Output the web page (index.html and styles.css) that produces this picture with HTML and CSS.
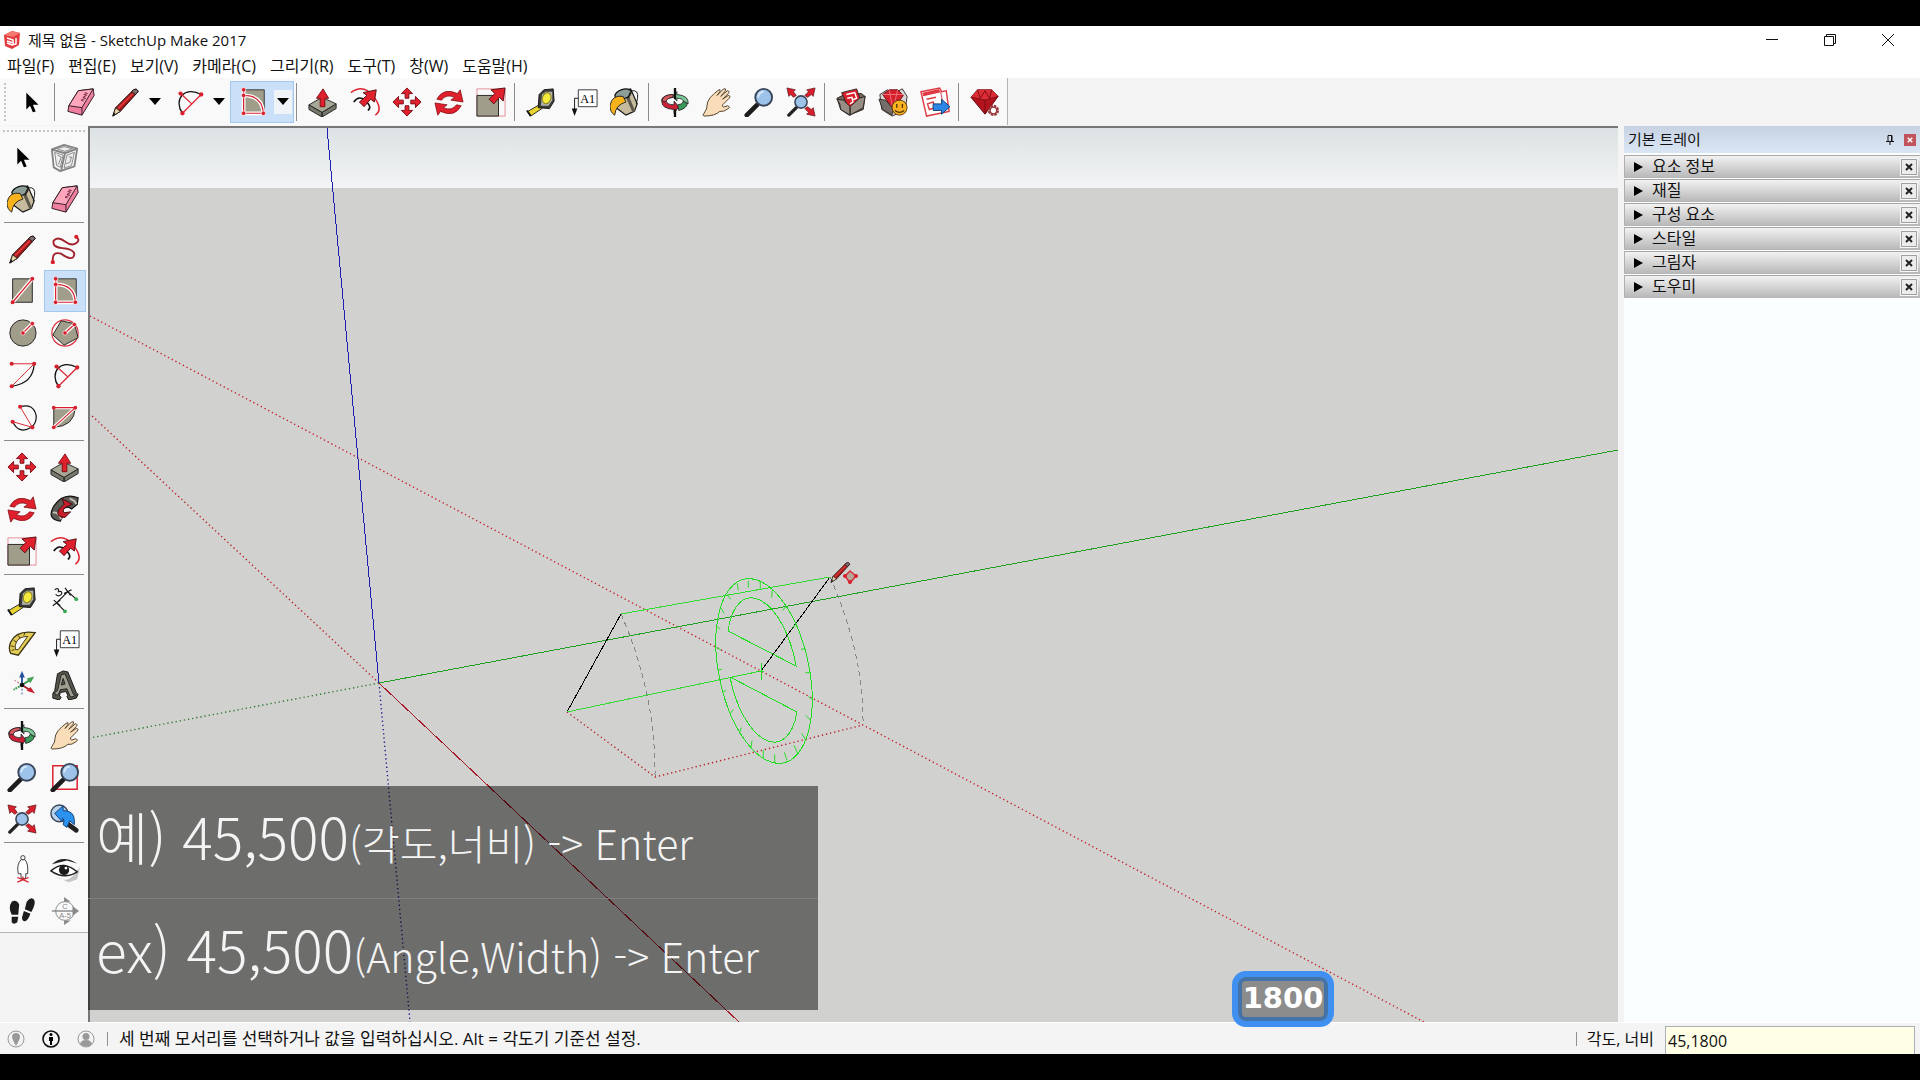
FILE: index.html
```html
<!DOCTYPE html>
<html lang="ko">
<head>
<meta charset="utf-8">
<meta name="viewport" content="width=device-width, initial-scale=1">
<title>제목 없음 - SketchUp Make 2017</title>
<link rel="stylesheet" href="styles.css">
</head>
<body>
<svg class="sprite" aria-hidden="true">
  <symbol id="cursor" viewBox="0 0 32 32"><path d="M11 6v18l4-4 3 7 3-1-3-7h6z" fill="#000"/></symbol>
  <symbol id="eraser" viewBox="0 0 32 32"><g stroke="#2b1a20" stroke-linejoin="round"><path d="M13 4l16-2 1 7-13 21-15-4 1-6z" fill="#ef7f9f"/><path d="M13 4l16-2-12 20-14-2z" fill="#ffa6bd"/><path d="M17 22v8" fill="none"/><path d="M20 6l3 1-4 1 3 1-4 2 3 1-5 2 3 1" fill="none" stroke="#7a2c44"/></g></symbol>
  <symbol id="pencil" viewBox="0 0 32 32"><path d="M3 31l3-9L25 3q4-2 5 2L11 26z" fill="#a01818" stroke="#221010"/><path d="M8 22L25 5l1 2L9 24z" fill="#e0363a"/><path d="M3 31l3-9 5 4z" fill="#e9d6a8" stroke="#222"/><path d="M3 31l1-4 2 2z" fill="#111"/><path d="M25 3q4-2 5 2l-3 3-4-3z" fill="#7d6f70" stroke="#221010"/></symbol>
  <symbol id="arc2" viewBox="0 0 32 32"><path d="M9 28C-1 14 11-2 29 8" fill="none" stroke="#111" stroke-width="1.4"/><path d="M9 28L29 8M7 7l12 11" stroke="#d8202c" stroke-width="1.3"/><g fill="#d8202c"><circle cx="9" cy="28" r="2.3"/><circle cx="29" cy="8" r="2.3"/><circle cx="7" cy="7" r="2.3"/></g></symbol>
  <symbol id="rotrect" viewBox="0 0 32 32"><path d="M6 3h22v25H6z" fill="#a09d8b" stroke="#333"/><path d="M6 3v25h21M6 9q20 0 21 19" fill="none" stroke="#fff" stroke-width="4"/><path d="M6 3v25h21M6 9q20 0 21 19" fill="none" stroke="#d8202c" stroke-width="1.3"/><g fill="#d8202c" stroke="#fff" stroke-width=".7"><circle cx="6" cy="3" r="2.4"/><circle cx="6" cy="9" r="2.4"/><circle cx="6" cy="28" r="2.4"/><circle cx="27" cy="28" r="2.4"/></g></symbol>
  <symbol id="pushpull" viewBox="0 0 32 32"><g stroke="#222" stroke-linejoin="round"><path d="M1 19l14 8v5L1 24zM15 27l15-9v5l-15 9z" fill="#77786c"/><path d="M1 19l14-8 15 7-15 9z" fill="#a8a896"/><path d="M13 21v-9H9l7-10 6 10h-4v9z" fill="#e0202c" stroke="#7c0d14"/></g></symbol>
  <symbol id="offset" viewBox="0 0 32 32"><path d="M1 6q13-10 24 4t2 20" fill="none" stroke="#dd2430" stroke-width="1.7"/><path d="M4 16q6-8 13-1t2 10" fill="none" stroke="#111" stroke-width="1.7"/><path d="M28 3l-2 13-4-3-7 8-5-5 8-7-4-3z" fill="#e0202c" stroke="#541014"/></symbol>
  <symbol id="move" viewBox="0 0 32 32"><g fill="#e0202c" stroke="#7c0d14"><path id="arm" d="M14 12V7h-4l6-6 6 6h-4v5z"/><use href="#arm" transform="rotate(90 16 16)"/><use href="#arm" transform="rotate(180 16 16)"/><use href="#arm" transform="rotate(270 16 16)"/></g></symbol>
  <symbol id="rotate" viewBox="0 0 32 32"><g fill="#e0202c" stroke="#7c0d14" stroke-width=".8"><path id="rotarm" d="M3 13Q10 0 25 7l3-4 3 13-13-2 4-3Q13 7 8 14z"/><use href="#rotarm" transform="rotate(180 16 16.500)"/></g></symbol>
  <symbol id="scale" viewBox="0 0 32 32"><path d="M1 2h30v29H1z" fill="none" stroke="#e58b92"/><path d="M1 9h23v22H1z" fill="#a09d8b" stroke="#222"/><path d="M31 1l-2 14-4-4-6 7-5-5 6-6-4-4z" fill="#e0202c" stroke="#541014"/></symbol>
  <symbol id="tape" viewBox="0 0 32 32"><path d="M2 26l12-7 3 4-12 8z" fill="#e8d42c" stroke="#222"/><path d="M1 25l4 6" stroke="#111" stroke-width="2"/><path d="M14 8l5-5 10-1 1 13-5 8-12-1z" fill="#3c3c38" stroke="#111"/><path d="M17 8l4-3 7 0v9l-4 6-8 0z" fill="#b4b4ae"/><ellipse cx="22" cy="12" rx="4.500" ry="6" fill="#f4ea3e" stroke="#887f18" transform="rotate(20 22 12)"/></symbol>
  <symbol id="label" viewBox="0 0 32 32"><path d="M11 3h20v18H11z" fill="#fff" stroke="#333"/><path d="M11 12H7v12" fill="none" stroke="#111"/><path d="M4 23h6L7 31z" fill="#111"/></symbol>
  <symbol id="bucket" viewBox="0 0 32 32"><path d="M10 5l12-3 7 16-3 8-9 4-12-9z" fill="#c6bb9c" stroke="#111" stroke-width="1.300"/><path d="M16 9l8 18 3-1-8-19z" fill="#5c594c"/><ellipse cx="14" cy="7.500" rx="9" ry="5" fill="#8d9d98" stroke="#111" stroke-width="1.300" transform="rotate(-18 14 7.500)"/><path d="M20 12q0-9 6-8t2 14" fill="none" stroke="#111"/><path d="M14 10Q2 8 0 20q0 7 5 10 1-11 12-14z" fill="#f8b21c" stroke="#222"/></symbol>
  <symbol id="orbit" viewBox="0 0 32 32"><g stroke="#222" stroke-width=".9"><path d="M14 8q-14 1-12 8 0 7 13 8v4l5-7-5-6v4q-8 0-9-5 1-2 8-3z" fill="#cc2036"/><path d="M2 15Q3 8 14 8v3q-6 0-8 5z" fill="#d4585c"/><path d="M29 18q-1 5-9 7l-1-6q5 0 6-4z" fill="#3a9a5c"/><path d="M18 5v3q13 1 12 10l-5-3q-1-3-7-3v3l-4-5z" fill="#7cc798"/></g><path d="M16 1v12M16 24v8" stroke="#111" stroke-width="2.500"/></symbol>
  <symbol id="hand" viewBox="0 0 32 32"><path d="M1 30q5-6 5-14 2-5 7-9l5-4q2-1 1 2l-3 4 7-7q3-1 2 2l-5 6 7-6q3 0 1 3l-6 6 6-4q3 0 1 3l-7 7q-1 4 5 1 4 1 1 3-5 4-9 3-5 5-17 5z" fill="#f8ddb8" stroke="#4c3c28"/></symbol>
  <symbol id="zoom" viewBox="0 0 32 32"><path d="M3 30L14 19" stroke="#1c1c1c" stroke-width="5" stroke-linecap="round"/><circle cx="21" cy="11" r="9" fill="#9dc3ea" stroke="#3a4658" stroke-width="2"/><path d="M15 11q1-6 6-6" fill="none" stroke="#d6e8f8" stroke-width="2"/></symbol>
  <symbol id="zoomwin" viewBox="0 0 32 32"><path d="M3 4h26v25H3z" fill="none" stroke="#dd2430" stroke-width="1.600"/><use href="#zoom"/></symbol>
  <symbol id="extents" viewBox="0 0 32 32"><path d="M3 30l8-8" stroke="#222" stroke-width="3.500" stroke-linecap="round"/><circle cx="16" cy="16" r="6.500" fill="#9dc3ea" stroke="#3a4658" stroke-width="1.700"/><g fill="#d8202c" stroke="#541014" stroke-width=".7"><path d="M1 1l9 2-2 2 3 4-3 2-3-3-2 2zM31 1l-9 2 2 2-4 4 3 2 4-3 2 2zM31 31l-9-2 2-2-4-4 3-2 4 3 2-2z"/></g></symbol>
  <symbol id="prev" viewBox="0 0 32 32"><circle cx="10" cy="10" r="9" fill="#b9d3ee" stroke="#3a4658" stroke-width="1.500"/><path d="M17 20l11 8" stroke="#222" stroke-width="5" stroke-linecap="round"/><path d="M5 10l9-8v5q12 0 12 11v4l-5-4-3 7-4-3q2-6-1-7v4z" fill="#2b92f0" stroke="#123f74"/></symbol>
  <symbol id="warehouse" viewBox="0 0 32 32"><g stroke="#2c2420" stroke-linejoin="round"><path d="M1 12l8-4 18-1 4 3-2 14-15 6L5 24z" fill="#71675f"/><path d="M6 6l16-4 5 14-13 8z" fill="#d8202c"/><path d="M1 13l7 1 7 7v9L5 24l-1-6zM31 10l-6 2-10 9v9l14-8z" fill="#988d84"/></g><path d="M11 8l9-2 2 6-5 2M12 12l5-1 1 5-3 2" fill="none" stroke="#fff" stroke-width="1.500"/></symbol>
  <symbol id="extwarehouse" viewBox="0 0 32 32"><path d="M2 8l8-5 6 4 10-5 5 8-2 15-14 6L4 24z" fill="#d9d5d2" stroke="#332d2a"/><path d="M5 8l7-5h9l6 6-11 15z" fill="#d8202c" stroke="#6c0d14"/><path d="M5 8h22M12 3l4 21 5-21" fill="none" stroke="#f08a90" stroke-width=".8"/><path d="M1 13l7 1 8 9-1 7-10-6z" fill="#756d67" stroke="#332d2a"/><circle cx="23" cy="22" r="8" fill="#f9b122" stroke="#523a08"/><path d="M20 18v4M26 18v4M18 25q5 4 10 0" fill="none" stroke="#4b3306" stroke-width="1.400"/></symbol>
  <symbol id="layout" viewBox="0 0 32 32"><path d="M1 5l20-4 2 4 5-1 3 22-24 5z" fill="#fff" stroke="#df3a44" stroke-width="1.500"/><path d="M3 8l18-4" stroke="#df3a44" stroke-width="4"/><path d="M22 5l4 22" stroke="#df3a44"/><path d="M7 13l10-2M8 18l6-2 2 6-6 2z" fill="none" stroke="#df3a44" stroke-width="1.500"/><path d="M14 18h9v-5l9 8-9 8v-4h-9z" fill="#2b86e4" stroke="#123f74"/></symbol>
  <symbol id="ruby" viewBox="0 0 32 32"><path d="M1 11l7-8h15l7 7-14 19z" fill="#b4121c" stroke="#5c0a10"/><path d="M1 11l7-8h15l7 7-14 4z" fill="#dc2c36"/><path d="M2 11l14 3 14-4M8 3l3 9 5-8 5 8 2-9M16 14v14" fill="none" stroke="#7c0d14"/><circle cx="25" cy="25" r="4.500" fill="#fff" stroke="#9b3a3e" stroke-width="3" stroke-dasharray="2.500 1"/><circle cx="25" cy="25" r="3.500" fill="none" stroke="#9b3a3e" stroke-width="1.500"/></symbol>
  <symbol id="component" viewBox="0 0 32 32"><g fill="none" stroke="#858585" stroke-linejoin="round"><path d="M2 8l13-5 14 4-3 19-15 5-7-4z" stroke-width="2"/><path d="M2 8l14 4 13-5M16 12l-4 18" stroke-width="2"/><path d="M5 11l9 3-3 13-4-2zM18 14l8-3-3 14-8 3zM7 7l8-2 9 2-8 3zM8 14l4 2-3 8M20 16l3 0-2 6-4 1" fill="#ededed"/></g></symbol>
  <symbol id="freehand" viewBox="0 0 32 32"><path d="M3 29q-1-11 9-8 12 9 14 1 0-6-13-7Q2 14 4 7q4-5 12 1t13 1q3-3-1-6" fill="none" stroke="#a0222c" stroke-width="2"/><g fill="#d8202c"><circle cx="3" cy="30" r="2.200"/><circle cx="28" cy="3" r="2.200"/></g></symbol>
  <symbol id="rect" viewBox="0 0 32 32"><path d="M6 3h21v25H6z" fill="#a09d8b" stroke="#222"/><path d="M6 28L27 3" stroke="#fff" stroke-width="4"/><path d="M6 28L27 3" stroke="#d8202c" stroke-width="1.300"/><g fill="#d8202c"><circle cx="6" cy="28" r="2.100"/><circle cx="27" cy="3" r="2.100"/></g></symbol>
  <symbol id="circle" viewBox="0 0 32 32"><circle cx="17" cy="16" r="14" fill="#a09d8b" stroke="#222"/><path d="M17 16l10-10" stroke="#fff" stroke-width="4"/><path d="M17 16l10-10" stroke="#d8202c" stroke-width="1.300"/><g fill="#d8202c" stroke="#fff" stroke-width=".6"><circle cx="17" cy="16" r="2.300"/><circle cx="27" cy="6" r="2.300"/></g></symbol>
  <symbol id="polygon" viewBox="0 0 32 32"><circle cx="16" cy="16" r="14" fill="none" stroke="#dd3540" stroke-width="1.300"/><path d="M12 3l14 3 4 15-15 8L3 18z" fill="#a09d8b" stroke="#222"/><path d="M16 16l10-9" stroke="#fff" stroke-width="4"/><path d="M16 16l10-9" stroke="#d8202c" stroke-width="1.300"/><g fill="#d8202c" stroke="#fff" stroke-width=".6"><circle cx="16" cy="16" r="2.300"/><circle cx="26" cy="7" r="2.300"/></g></symbol>
  <symbol id="arc" viewBox="0 0 32 32"><path d="M29 4Q28 25 5 28" fill="none" stroke="#111" stroke-width="1.300"/><path d="M5 28L29 4H5" fill="none" stroke="#d8202c"/><g fill="#d8202c"><circle cx="5" cy="28" r="2.200"/><circle cx="29" cy="4" r="2.200"/><circle cx="5" cy="4" r="2.200"/></g></symbol>
  <symbol id="arc3" viewBox="0 0 32 32"><path d="M14 5q14-4 17 9 1 8-5 13-13 8-20-6" fill="none" stroke="#111" stroke-width="1.300"/><path d="M14 5l13 22L6 21" fill="none" stroke="#d8202c"/><g fill="#d8202c"><circle cx="14" cy="5" r="2.200"/><circle cx="27" cy="27" r="2.200"/><circle cx="6" cy="21" r="2.200"/></g></symbol>
  <symbol id="pie" viewBox="0 0 32 32"><path d="M4 6h23q-1 20-23 21z" fill="#a09d8b" stroke="#222"/><path d="M4 27L27 6H4" fill="none" stroke="#fff" stroke-width="3.500"/><path d="M4 27L27 6H4" fill="none" stroke="#d8202c" stroke-width="1.200"/><g fill="#d8202c"><circle cx="4" cy="27" r="2"/><circle cx="27" cy="6" r="2"/><circle cx="4" cy="6" r="2"/></g></symbol>
  <symbol id="follow" viewBox="0 0 32 32"><path d="M11 29Q-4 27 4 13 14-2 30 4l-1 7-6 5q-4-4-9 0-4 4-1 9z" fill="#5d5b56" stroke="#111" stroke-width="1.300"/><path d="M3 20q5-2 9 7M21 5q6 2 7 6" fill="none" stroke="#c9c5b6" stroke-width="2"/><path d="M13 5l11 6-5 2q-7 3-4 7l7-1-6 6q-10 0-7-8l6-6z" fill="#c81e2a" stroke="#3c0c10"/></symbol>
  <symbol id="dimension" viewBox="0 0 32 32"><path d="M7 18L19 6M7 18l9 9M19 6l9 8M4 15l7 6M3 21l8-6M16 2l6 8M15 8l8-4" fill="none" stroke="#111" stroke-width="1.200"/><path d="M5 4q5-3 4 2 5-1 3 3-3 3-6 0" fill="none" stroke="#222" stroke-width="1.300"/><g fill="#36a853"><circle cx="16" cy="27" r="2"/><circle cx="28" cy="14" r="2"/></g></symbol>
  <symbol id="protractor" viewBox="0 0 32 32"><path d="M30 5Q10 2 4 15q-3 7 0 12l8 2z" fill="#e3cc55" stroke="#3c3414" stroke-width="1.400"/><path d="M22 9Q13 9 10 15q-2 4-1 8h3z" fill="#fafafa" stroke="#3c3414"/><path d="M5 24l3-1M4 19l4 1M7 13l3 2M12 8l2 3M19 5l-1 3" stroke="#3c3414"/></symbol>
  <symbol id="axes" viewBox="0 0 32 32"><path d="M16 16V7" stroke="#24549c" stroke-width="2"/><path d="M13 8l3-7 3 7z" fill="#24549c"/><path d="M16 16l8-5" stroke="#2f9040" stroke-width="2"/><path d="M21 9l8-2-4 7z" fill="#44a054"/><path d="M16 16l8 5" stroke="#a82028" stroke-width="2"/><path d="M21 22l4-4 5 7z" fill="#c8202c"/><path d="M16 16v11" stroke="#24549c" stroke-dasharray="2 2"/><path d="M16 16l-9 5" stroke="#2f9040" stroke-width="2" stroke-dasharray="2 1"/><path d="M16 16l-8-5" stroke="#a82028" stroke-dasharray="2 2"/><circle cx="16" cy="16" r="2.500" fill="#111"/></symbol>
  <symbol id="text3d" viewBox="0 0 32 32"><path d="M3 25l2-3L8 4l6-3 5 1 9 22 2 2-2 4-8 2-2-4 1-1-2-4-6 1-1 4 2 1-2 3-7-2z" fill="#55554c" stroke="#111"/><path d="M5 24l3-2 4-17 4-1 9 22 3 1-6 2-1-2-3-7-7 1-2 5-3 1zM12 16l4-1-2-6z" fill="#a09e90" stroke="#222"/></symbol>
  <symbol id="camera" viewBox="0 0 32 32"><path d="M15 6q-5 5-3 15h3v5h5v-5h2q1-11-3-15z" fill="#fff" stroke="#333"/><circle cx="17" cy="4" r="2.300" fill="#fff" stroke="#333"/><path d="M11 25l12 5M23 25l-12 5M17 24v4" stroke="#d8202c" stroke-width="1.300"/></symbol>
  <symbol id="eye" viewBox="0 0 32 32"><path d="M6 24q10 8 20-2l6-9-3 14-9 3z" fill="#c4c4c4"/><path d="M1 18Q14 6 29 19 15 28 1 18z" fill="#fff" stroke="#222" stroke-width="1.600"/><path d="M2 11Q13 0 29 10L18 7z" fill="#222"/><circle cx="15" cy="17" r="5.500" fill="#1a1a1a"/><circle cx="17" cy="15" r="1.500" fill="#fff"/></symbol>
  <symbol id="walk" viewBox="0 0 32 32"><g fill="#1c1c1c"><path d="M5 6q5-3 8 3l-1 11H5Q1 12 5 6zM5 22h7l-1 6q-4 3-6 0zM21 6q5-6 8-2 2 4-3 13l-7-3zM18 16l7 3q-3 8-6 8t-3-4z"/></g></symbol>
  <symbol id="section" viewBox="0 0 32 32"><g fill="none" stroke="#888"><circle cx="16" cy="16" r="10"/><path d="M2 16h27" stroke-width="1.500"/></g><path d="M15 1l7 5h-7zM15 31l7-5h-7zM24 11l7 5-7 5z" fill="#888"/></symbol>
</svg>

<header class="titlebar">
  <svg class="logo" viewBox="0 0 18 20" aria-hidden="true"><path d="M1 5l8-4 8 2-1 12-7 4-7-3z" fill="#e23b3f"/><path d="M1 5l8-4 8 2-7 4z" fill="#f47a70"/><path d="M4 8l6 2v3l-6-2M4 13l5 2 4-1V8" fill="none" stroke="#fff" stroke-width="1.500"/></svg>
  <h1 class="title">제목 없음 - SketchUp Make 2017</h1>
  <div class="window-buttons">
    <button aria-label="최소화"><svg viewBox="0 0 14 14"><path d="M1 6.500h12"/></svg></button>
    <button aria-label="이전 크기로"><svg viewBox="0 0 14 14"><path d="M1.500 3.500h9v9h-9zM3.500 3V1.500h9v9H11"/></svg></button>
    <button aria-label="닫기"><svg viewBox="0 0 14 14"><path d="M1 1l12 12M13 1L1 13"/></svg></button>
  </div>
</header>

<nav class="menubar">
  <button>파일(F)</button><button>편집(E)</button><button>보기(V)</button><button>카메라(C)</button><button>그리기(R)</button><button>도구(T)</button><button>창(W)</button><button>도움말(H)</button>
</nav>

<div class="toolstrip">
  <div class="toolbar" role="toolbar" aria-label="시작하기">
    <span class="grip"></span>
    <button class="tool" aria-label="선택"><svg><use href="#cursor"/></svg></button>
    <span class="sep"></span>
    <button class="tool" aria-label="지우개"><svg><use href="#eraser"/></svg></button>
    <div class="split"><button class="tool" aria-label="선"><svg><use href="#pencil"/></svg></button><button class="drop" aria-label="선 도구 목록"></button></div>
    <div class="split"><button class="tool" aria-label="호"><svg><use href="#arc2"/></svg></button><button class="drop" aria-label="호 도구 목록"></button></div>
    <div class="split active"><button class="tool" aria-label="회전된 사각형"><svg><use href="#rotrect"/></svg></button><button class="drop" aria-label="도형 도구 목록"></button></div>
    <span class="sep"></span>
    <button class="tool" aria-label="밀기/끌기"><svg><use href="#pushpull"/></svg></button>
    <button class="tool" aria-label="오프셋"><svg><use href="#offset"/></svg></button>
    <button class="tool" aria-label="이동"><svg><use href="#move"/></svg></button>
    <button class="tool" aria-label="회전"><svg><use href="#rotate"/></svg></button>
    <button class="tool" aria-label="배율"><svg><use href="#scale"/></svg></button>
    <span class="sep"></span>
    <button class="tool" aria-label="줄자 도구"><svg><use href="#tape"/></svg></button>
    <button class="tool" aria-label="텍스트"><svg viewBox="0 0 32 32"><use href="#label"/><text x="21" y="17" class="icon-text">A1</text></svg></button>
    <button class="tool" aria-label="페인트 통"><svg><use href="#bucket"/></svg></button>
    <span class="sep"></span>
    <button class="tool" aria-label="궤도"><svg><use href="#orbit"/></svg></button>
    <button class="tool" aria-label="화면 이동"><svg><use href="#hand"/></svg></button>
    <button class="tool" aria-label="확대/축소"><svg><use href="#zoom"/></svg></button>
    <button class="tool" aria-label="범위 확대/축소"><svg><use href="#extents"/></svg></button>
    <span class="sep"></span>
    <button class="tool" aria-label="3D Warehouse"><svg><use href="#warehouse"/></svg></button>
    <button class="tool" aria-label="Extension Warehouse"><svg><use href="#extwarehouse"/></svg></button>
    <button class="tool" aria-label="LayOut으로 보내기"><svg><use href="#layout"/></svg></button>
    <span class="sep"></span>
    <button class="tool" aria-label="확장 관리자"><svg><use href="#ruby"/></svg></button>
  </div>
</div>

<main class="workspace">
  <aside class="palette-dock">
    <div class="palette" role="toolbar" aria-label="큰 도구 세트">
      <span class="palette-grip"></span>
      <div class="tool-group">
        <button class="tool" aria-label="선택"><svg><use href="#cursor"/></svg></button>
        <button class="tool" aria-label="구성 요소 만들기"><svg><use href="#component"/></svg></button>
        <button class="tool" aria-label="페인트 통"><svg><use href="#bucket"/></svg></button>
        <button class="tool" aria-label="지우개"><svg><use href="#eraser"/></svg></button>
      </div>
      <div class="tool-group">
        <button class="tool" aria-label="선"><svg><use href="#pencil"/></svg></button>
        <button class="tool" aria-label="자유형"><svg><use href="#freehand"/></svg></button>
        <button class="tool" aria-label="사각형"><svg><use href="#rect"/></svg></button>
        <button class="tool active" aria-label="회전된 사각형"><svg><use href="#rotrect"/></svg></button>
        <button class="tool" aria-label="원"><svg><use href="#circle"/></svg></button>
        <button class="tool" aria-label="다각형"><svg><use href="#polygon"/></svg></button>
        <button class="tool" aria-label="호"><svg><use href="#arc"/></svg></button>
        <button class="tool" aria-label="2점 호"><svg><use href="#arc2"/></svg></button>
        <button class="tool" aria-label="3점 호"><svg><use href="#arc3"/></svg></button>
        <button class="tool" aria-label="파이"><svg><use href="#pie"/></svg></button>
      </div>
      <div class="tool-group">
        <button class="tool" aria-label="이동"><svg><use href="#move"/></svg></button>
        <button class="tool" aria-label="밀기/끌기"><svg><use href="#pushpull"/></svg></button>
        <button class="tool" aria-label="회전"><svg><use href="#rotate"/></svg></button>
        <button class="tool" aria-label="따라가기"><svg><use href="#follow"/></svg></button>
        <button class="tool" aria-label="배율"><svg><use href="#scale"/></svg></button>
        <button class="tool" aria-label="오프셋"><svg><use href="#offset"/></svg></button>
      </div>
      <div class="tool-group">
        <button class="tool" aria-label="줄자 도구"><svg><use href="#tape"/></svg></button>
        <button class="tool" aria-label="치수"><svg><use href="#dimension"/></svg></button>
        <button class="tool" aria-label="각도기"><svg><use href="#protractor"/></svg></button>
        <button class="tool" aria-label="텍스트"><svg viewBox="0 0 32 32"><use href="#label"/><text x="21" y="17" class="icon-text">A1</text></svg></button>
        <button class="tool" aria-label="축"><svg><use href="#axes"/></svg></button>
        <button class="tool" aria-label="3D 텍스트"><svg><use href="#text3d"/></svg></button>
      </div>
      <div class="tool-group">
        <button class="tool" aria-label="궤도"><svg><use href="#orbit"/></svg></button>
        <button class="tool" aria-label="화면 이동"><svg><use href="#hand"/></svg></button>
        <button class="tool" aria-label="확대/축소"><svg><use href="#zoom"/></svg></button>
        <button class="tool" aria-label="창 확대/축소"><svg><use href="#zoomwin"/></svg></button>
        <button class="tool" aria-label="범위 확대/축소"><svg><use href="#extents"/></svg></button>
        <button class="tool" aria-label="이전"><svg><use href="#prev"/></svg></button>
      </div>
      <div class="tool-group">
        <button class="tool" aria-label="카메라 배치"><svg><use href="#camera"/></svg></button>
        <button class="tool" aria-label="둘러보기"><svg><use href="#eye"/></svg></button>
        <button class="tool" aria-label="이동 시점"><svg><use href="#walk"/></svg></button>
        <button class="tool" aria-label="단면"><svg viewBox="0 0 32 32"><use href="#section"/><text x="16" y="14" class="icon-mini">C</text><text x="16" y="23" class="icon-mini">A-5</text></svg></button>
      </div>
    </div>
  </aside>

  <section class="viewport" aria-label="모델">
    <svg class="scene" viewBox="90 128 1528 894" preserveAspectRatio="xMinYMin slice">
      <!-- drawing axes -->
      <g class="dotted">
        <path d="M379 683L410 1022" stroke="#1c1c90"/>
        <path d="M379 683L90 738" stroke="#2c7a2c"/>
        <path d="M379 683L90 414" stroke="#b81c24"/>
        <path d="M90 316L863 725 1424 1022" stroke="#c41c2c"/>
        <path d="M567 712L655 777 863 725" stroke="#b81c24"/>
      </g>
      <g fill="none" shape-rendering="crispEdges">
        <path d="M327 128L379 683" stroke="#2020b0"/>
        <path d="M379 683L1618 450" stroke="#20a020"/>
        <path d="M379 683L739 1022" stroke="#a81828"/>
        <path d="M621 614Q656 694 655 777M830 577Q864 654 863 725" stroke="#858585" stroke-dasharray="5 4"/>
        <path d="M567 712L621 614M761 671L830 577" stroke="#000"/>
        <path d="M621 614L830 577M567 712L761 671" stroke="#30dc30"/>
      </g>
      <!-- protractor -->
      <g fill="none" stroke="#22dc22" shape-rendering="crispEdges">
        <ellipse cx="764" cy="671" rx="94" ry="45" transform="rotate(78 764 671)"/>
        <path d="M728 631L796 666A70 33 78 0 0 728 631M730 677L797 712A70 33 78 0 1 730 677M761 663v17M756 671h8"/>
      </g>
      <g class="ticks" transform="translate(540 540) scale(.3333)">
        <path d="M592 130l3 21M625 122v21M661 125v22M697 150l-2 23M738 199l-10 13M769 250l-12 15M783 328l13-3M796 398h15M805 470l12 8M797 526l14 14M785 580l12 20M762 616l11 24M733 637l8 24M704 643v25M670 630v26M636 602l-3 23M604 563l-6 18M580 508l-10 14M559 452l-12 4M546 388l-13 2M543 330l-14-8M541 268l-11-10M552 220l-9-17M572 178l-10-15"/>
      </g>
      <use href="#pencil" x="829" y="561" width="22" height="22"/>
      <path d="M845 576l5-5 6 5-6 7z" fill="#b4a898" stroke="#d8303c" stroke-width="1.500"/>
      <g fill="#d8202c"><circle cx="845" cy="576" r="2"/><circle cx="856" cy="576" r="2"/><circle cx="850" cy="582" r="2"/></g>
    </svg>
    <div class="caption">
      <p><b>예) 45,500</b>(각도,너비) -&gt; Enter</p>
      <p><b>ex) 45,500</b>(Angle,Width) -&gt; Enter</p>
    </div>
    <div class="keycast">1800</div>
  </section>

  <aside class="tray">
    <header class="tray-title">
      <h2>기본 트레이</h2>
      <button class="pin" aria-label="자동 숨기기"><svg viewBox="0 0 8 10"><path d="M2 0.500h4V6M2 0.500V6M0 6.500h8M4 6v4M5.500 1v5"/></svg></button>
      <button class="tray-close" aria-label="트레이 닫기"><svg viewBox="0 0 8 8"><path d="M1 1l6 6M7 1L1 7"/></svg></button>
    </header>
    <ul class="panels">
      <li><button class="panel-name">요소 정보</button><button class="panel-close" aria-label="요소 정보 닫기"><svg viewBox="0 0 8 8"><path d="M1 1l6 6M7 1L1 7"/></svg></button></li>
      <li><button class="panel-name">재질</button><button class="panel-close" aria-label="재질 닫기"><svg viewBox="0 0 8 8"><path d="M1 1l6 6M7 1L1 7"/></svg></button></li>
      <li><button class="panel-name">구성 요소</button><button class="panel-close" aria-label="구성 요소 닫기"><svg viewBox="0 0 8 8"><path d="M1 1l6 6M7 1L1 7"/></svg></button></li>
      <li><button class="panel-name">스타일</button><button class="panel-close" aria-label="스타일 닫기"><svg viewBox="0 0 8 8"><path d="M1 1l6 6M7 1L1 7"/></svg></button></li>
      <li><button class="panel-name">그림자</button><button class="panel-close" aria-label="그림자 닫기"><svg viewBox="0 0 8 8"><path d="M1 1l6 6M7 1L1 7"/></svg></button></li>
      <li><button class="panel-name">도우미</button><button class="panel-close" aria-label="도우미 닫기"><svg viewBox="0 0 8 8"><path d="M1 1l6 6M7 1L1 7"/></svg></button></li>
    </ul>
  </aside>
</main>

<footer class="statusbar">
  <button class="status-icon" aria-label="위치 정보"><svg viewBox="0 0 18 18"><circle cx="9" cy="9" r="8" fill="none" stroke="#999"/><path d="M9 16Q5 9 5 7a4 4 0 0 1 8 0q0 2-4 9z" fill="#999"/></svg></button>
  <button class="status-icon" aria-label="제작자"><svg viewBox="0 0 18 18"><circle cx="9" cy="9" r="8" fill="none" stroke="#111" stroke-width="1.600"/><circle cx="9" cy="4.500" r="1.500"/><path d="M7 7h4v4h-1v4H8v-4H7z"/></svg></button>
  <button class="status-icon" aria-label="로그인"><svg viewBox="0 0 18 18"><circle cx="9" cy="9" r="8" fill="none" stroke="#999"/><circle cx="9" cy="6.500" r="3.500" fill="#999"/><path d="M3 14q1-4 6-4t6 4q-6 5-12 0z" fill="#999"/></svg></button>
  <span class="rule"></span>
  <p class="hint">세 번째 모서리를 선택하거나 값을 입력하십시오. Alt = 각도기 기준선 설정.</p>
  <span class="rule"></span>
  <label for="measure">각도, 너비</label>
  <input id="measure" class="measure" type="text" value="45,1800">
</footer>
</body>
</html>
```
FILE: styles.css
```css
* { box-sizing: border-box; }

body {
  margin: 0;
  padding: 26px 0;
  min-height: 100vh;
  display: flex;
  flex-direction: column;
  background: #000;
  color: #111;
  font: 16px/20px "Open Sans", "Noto Sans CJK KR", sans-serif;
}

h1, h2, p, ul { margin: 0; padding: 0; font: inherit; }
ul { list-style: none; }

button {
  margin: 0;
  padding: 0;
  border: 0;
  background: none;
  color: inherit;
  font: inherit;
}

.sprite { position: absolute; width: 0; height: 0; }
.icon-text { font: 13px "Liberation Serif", serif; text-anchor: middle; }
.icon-mini { font: 8px "Liberation Sans", sans-serif; fill: #888; text-anchor: middle; }

/* Title bar and menus */
.titlebar {
  display: flex;
  align-items: center;
  height: 28px;
  padding: 0 3px;
  background: #fff;
}
.logo { width: 18px; height: 20px; }
.title { flex: 1; margin-left: 7px; white-space: nowrap; font-size: 15px; }
.window-buttons { display: flex; }
.window-buttons button { width: 58px; height: 28px; }
.window-buttons svg {
  display: block;
  width: 14px;
  height: 14px;
  margin: 0 auto;
  fill: none;
  stroke: #111;
}

.menubar {
  display: flex;
  gap: 14px;
  height: 24px;
  padding: 0 7px;
  background: #fff;
  white-space: nowrap;
}
.menubar button { line-height: 24px; }

/* Horizontal toolbar */
.toolstrip { display: flex; height: 48px; background: #f4f4f4; }
.toolbar {
  display: flex;
  align-items: center;
  height: 47px;
  padding-right: 1px;
  background: #f9f9fa;
  border-right: 1px solid #b5b5b5;
}
.grip {
  width: 10px;
  height: 38px;
  background: linear-gradient(#c4c4c4 50%, transparent 50%) 4px 0 / 2px 4px repeat-y;
}
.tool {
  display: grid;
  place-items: center;
  width: 42px;
  height: 42px;
  flex: none;
}
.tool svg { width: 30px; height: 30px; overflow: visible; }
.sep { width: 8px; height: 38px; background: linear-gradient(#8c8c8c, #8c8c8c) 2px 0 / 1px 100% no-repeat; }
.split { display: flex; align-items: center; width: 64px; }
.split .tool { padding-left: 3px; }
.drop { display: grid; place-items: center; width: 21px; height: 24px; }
.drop::before {
  content: "";
  border: 6px solid transparent;
  border-top: 7px solid #000;
  border-bottom: 0;
}
.active { background: #c9e0f8; outline: 1px solid #a4c9ee; outline-offset: -1px; }
.active .drop { width: 18px; margin-left: 2px; background: #f0f4f9; }

/* Workspace columns */
.workspace { flex: 1; display: flex; background: #f4f4f4; min-height: 0; }
.palette-dock { width: 88px; flex: none; }
.palette {
  padding: 4px 0 0 1px;
  background: #f9f9fa;
  border-bottom: 1px solid #b5b5b5;
}
.palette-grip {
  display: block;
  height: 2px;
  margin: 0 2px 4px;
  background: linear-gradient(90deg, #c4c4c4 50%, transparent 50%) 0 0 / 4px 2px repeat-x;
}
.tool-group { display: grid; grid-template-columns: 42px 42px; column-gap: 1px; }
.tool-group + .tool-group { padding-top: 8px; background: linear-gradient(#8c8c8c, #8c8c8c) 3px 2px / 80px 1px no-repeat; }

.viewport {
  position: relative;
  flex: 1;
  min-width: 0;
  border: solid #777;
  border-width: 2px 0 0 2px;
  background: linear-gradient(#dde2e4, #f2f4f5 60px, #d1d1cf 60px);
}
.scene { position: absolute; inset: 0; width: 100%; height: 100%; }
.dotted path { fill: none; stroke-width: 1.4; stroke-dasharray: 1.3 2.9; }
.ticks path { fill: none; stroke: #30dc30; stroke-width: 3; }

.caption {
  position: absolute;
  left: -2px;
  bottom: 12px;
  width: 730px;
  background: rgba(0, 0, 0, .48);
  color: #f4f4f4;
  font: 300 41px/98px "Noto Sans CJK KR", sans-serif;
  white-space: nowrap;
}
.caption p { height: 112px; padding-left: 8px; }
.caption p + p { border-top: 1px solid #808080; }
.caption b { font-weight: 300; font-size: 57px; }

.keycast {
  position: absolute;
  right: 284px;
  bottom: -5px;
  width: 102px;
  height: 56px;
  border: 6px solid #3f90f0;
  border-radius: 14px;
  background: #8c8c8c;
  box-shadow: inset 0 0 0 4px #4373a8;
  color: #fff;
  font: bold 29px/42px "DejaVu Sans", sans-serif;
  text-align: center;
}

/* Tray */
.tray { width: 296px; flex: none; margin-left: 6px; background: #fbfeff; }
.tray-title {
  display: flex;
  align-items: center;
  gap: 10px;
  height: 27px;
  margin-bottom: 2px;
  padding: 0 4px;
  background: linear-gradient(#c6d2e2, #dbe6f5);
}
.tray-title h2 { flex: 1; height: 22px; font-size: 15px; }
.tray-title button { display: grid; place-items: center; }
.pin svg { width: 8px; height: 10px; fill: none; stroke: #111; }
.tray-close { width: 12px; height: 12px; background: #c0545a; }
.tray-close svg { width: 6px; height: 6px; stroke: #fff; stroke-width: 2; }
.panels li {
  display: flex;
  align-items: center;
  height: 23px;
  margin-bottom: 1px;
  padding-right: 3px;
  border-top: 1px solid #a8a8a8;
  border-left: 1px solid #b0b0b0;
  background: linear-gradient(#f2f2f2, #b6b6b6);
}
.panel-name {
  display: flex;
  align-items: center;
  align-self: flex-start;
  flex: 1;
  height: 20px;
  text-align: left;
}
.panel-name::before {
  content: "";
  margin: 2px 9px 0;
  border: 5px solid transparent;
  border-left: 9px solid #000;
  border-right: 0;
}
.panel-close {
  display: grid;
  place-items: center;
  width: 16px;
  height: 16px;
  border: 1px solid #a0a0a0;
  background: #ececec;
  outline: 1px solid #f8f8f8;
}
.panel-close svg { width: 8px; height: 8px; stroke: #222; stroke-width: 2; }

/* Status bar */
.statusbar {
  display: flex;
  align-items: center;
  height: 32px;
  padding: 0 5px 0 7px;
  background: #f4f4f5;
  border-top: 1px solid #fff;
  white-space: nowrap;
}
.status-icon { width: 18px; height: 18px; margin-right: 17px; }
.status-icon svg { display: block; }
.rule { width: 1px; height: 14px; background: #909090; }
.status-icon + .rule { margin-left: -5px; }
.hint { flex: 1; margin-left: 11px; font-size: 17px; line-height: 22px; }
.statusbar label { margin: 0 11px 0 10px; }
.measure {
  width: 250px;
  height: 28px;
  align-self: flex-end;
  padding: 0 2px;
  border: 1px solid #a8b0b8;
  border-bottom: 0;
  background: #ffffe6;
  color: #111;
  font: inherit;
}
```
